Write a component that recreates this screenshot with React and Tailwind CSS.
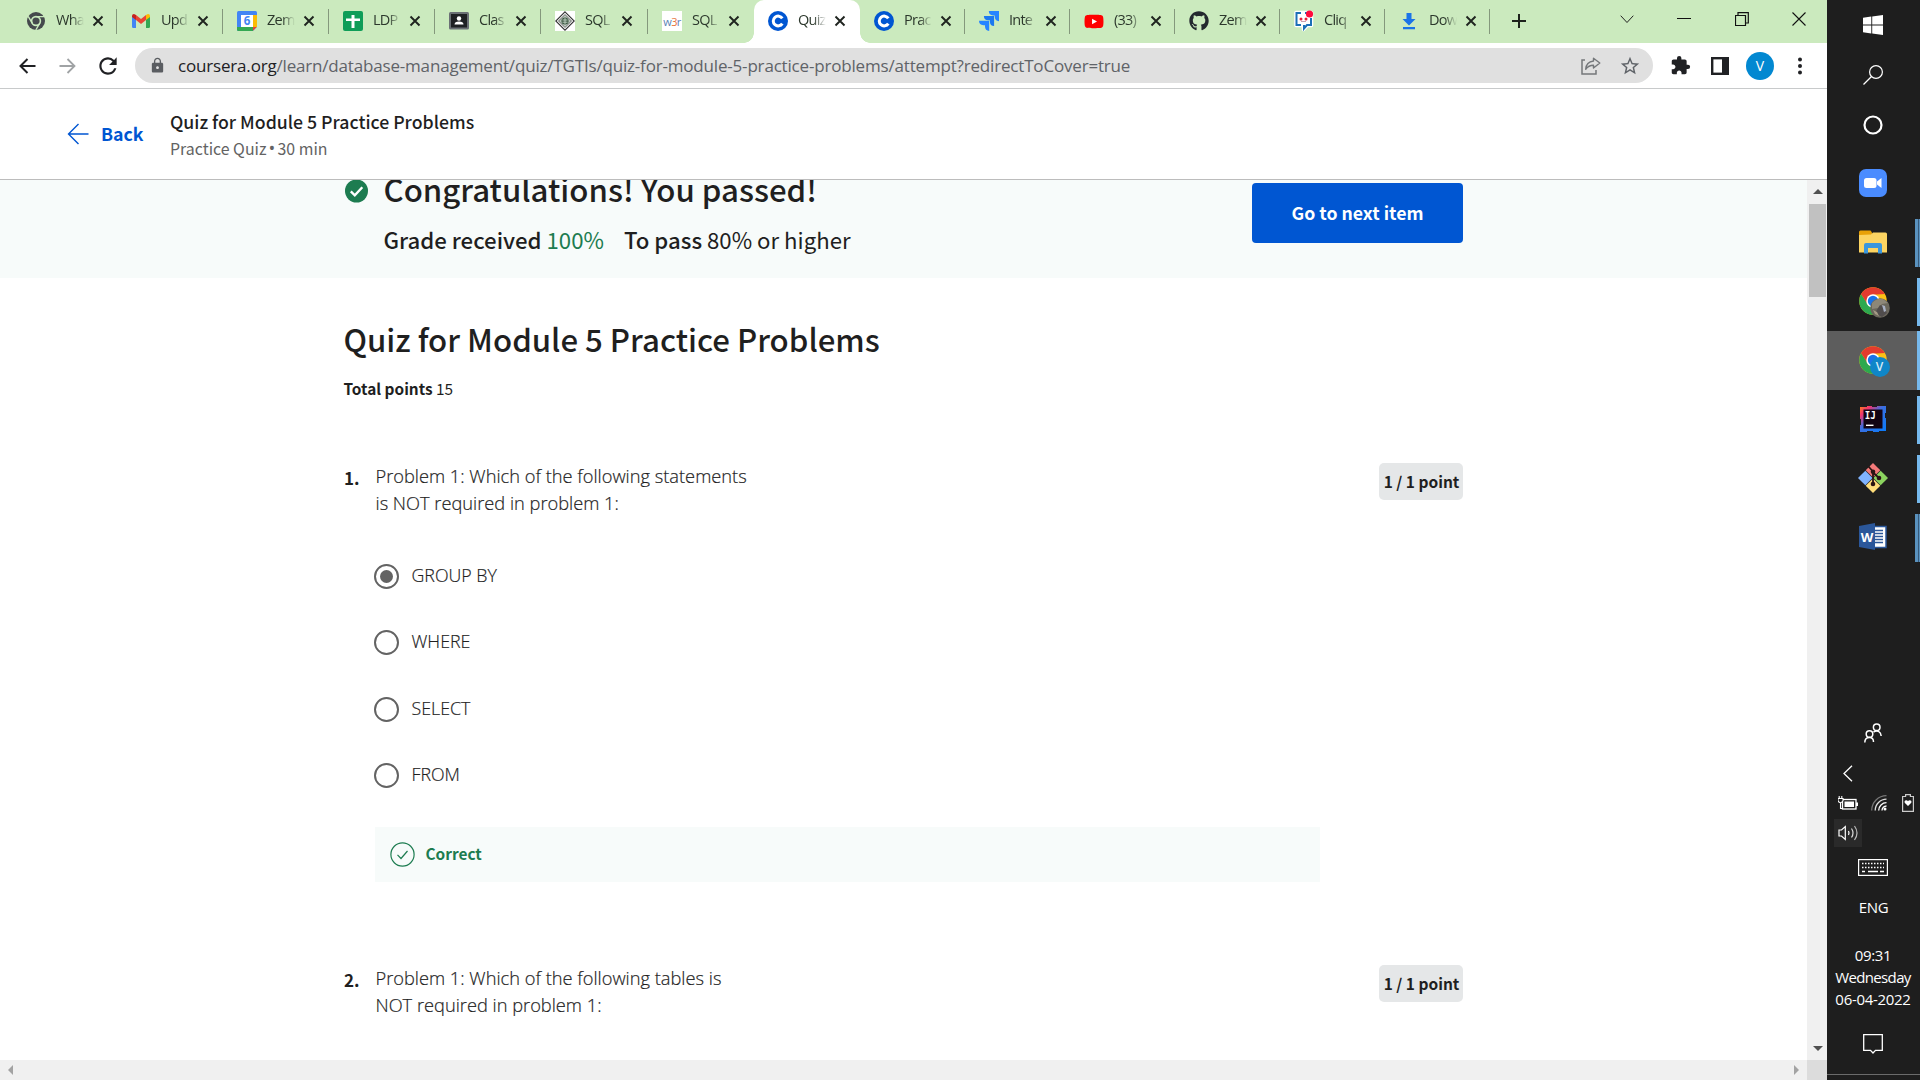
import { FaYoutube, FaGithub } from "react-icons/fa";
import { MdExtension, MdLock, MdStarBorder, MdRefresh } from "react-icons/md";

/* ---------- favicons ---------- */
const ChromeGrey = () => (
  <svg width="20" height="20" viewBox="0 0 20 20">
    <circle cx="10" cy="10" r="9" fill="#45494d" />
    <circle cx="10" cy="10" r="4.4" fill="#45494d" stroke="#caeabe" strokeWidth="1.6" />
    <path d="M10 5.6H18M6.2 12.2L2.2 5.3M13.8 12.2L9.8 19" stroke="#caeabe" strokeWidth="1.4" />
  </svg>
);
const Gmail = () => (
  <svg width="20" height="20" viewBox="0 0 20 20">
    <path d="M1 16.5V5l4 3v9H2.2Q1 17 1 15.5z" fill="#4285f4" />
    <path d="M15 17V8l4-3v10.5q0 1.500-1.200 1.500z" fill="#34a853" />
    <path d="M1 6V5q0-2 2-2l2 1v5z" fill="#c5221f" />
    <path d="M19 6V5q0-2-2-2l-2 1v5z" fill="#fbbc04" />
    <path d="M5 4l5 4 5-4v5l-5 4-5-4z" fill="#ea4335" />
  </svg>
);
const Calendar = () => (
  <svg width="20" height="20" viewBox="0 0 20 20">
    <rect width="20" height="20" rx="1.500" fill="#4285f4" />
    <path d="M16 4h4v12h-4z" fill="#fbbc04" />
    <path d="M0 16h16v4H1.500Q0 20 0 18.500z" fill="#34a853" />
    <path d="M16 16h4l-4 4z" fill="#ea4335" />
    <path d="M20 16v4h-4z" fill="#caeabe" />
    <rect x="4" y="4" width="12" height="12" fill="#fff" />
    <text x="10" y="14.200" textAnchor="middle" fontSize="11.500" fontWeight="700" fill="#4285f4" fontFamily="Open Sans, sans-serif">6</text>
  </svg>
);
const Sheets = () => (
  <svg width="20" height="20" viewBox="0 0 20 20">
    <rect width="20" height="20" rx="2" fill="#0f9d58" />
    <path d="M8.500 4h3v3.500H17v2.500h-5.500V17h-3v-7H3V7.500h5.500z" fill="#fff" />
  </svg>
);
const Classroom = () => (
  <svg width="20" height="20" viewBox="0 0 20 20">
    <rect y="1" width="20" height="17.500" rx="1.500" fill="#6b7075" />
    <rect x="2" y="3" width="16" height="13.500" fill="#1f2124" />
    <circle cx="10" cy="7.500" r="2.200" fill="#fff" />
    <path d="M5.500 13.500q0-3 4.500-3t4.500 3z" fill="#fff" />
  </svg>
);
const SqlDiamond = () => (
  <svg width="20" height="20" viewBox="0 0 20 20">
    <rect width="20" height="20" fill="#fff" />
    <path d="M10 .8L19.200 10 10 19.200.8 10z" fill="none" stroke="#333" strokeWidth="1.100" />
    <path d="M10 3.500L16.500 10 10 16.500 3.500 10z" fill="#b9c6bb" stroke="#444" strokeWidth=".8" />
    <circle cx="10" cy="10" r="3.600" fill="#3f5a45" />
    <path d="M7.500 9h5M7.500 11.200h5M10 7v6" stroke="#cfe0d2" strokeWidth=".8" />
  </svg>
);
const W3r = () => (
  <span className="flex h-5 w-5 items-center justify-center bg-white font-['Open_Sans',sans-serif] text-[11px] leading-none tracking-[-0.6px] text-[#5b7fb5]">
    w<span className="text-[#e8743b]">3</span>r
  </span>
);
const Coursera = () => (
  <svg width="20" height="20" viewBox="0 0 20 20">
    <circle cx="10" cy="10" r="10" fill="#0056d2" />
    <path d="M14.300 7.400A4.900 4.900 0 1 0 14.300 12.600" fill="none" stroke="#fff" strokeWidth="3" />
  </svg>
);
const Jira = () => (
  <svg width="20" height="20" viewBox="0 0 20 20">
    <path d="M9.800 0H20v10.200a4.500 4.500 0 0 1-4.200-4.400V4.400h-1.600A4.500 4.500 0 0 1 9.800 0z" fill="#2684ff" />
    <path d="M4.900 4.900h10.200v10.200a4.500 4.500 0 0 1-4.200-4.400V9.300H9.300a4.500 4.500 0 0 1-4.400-4.400z" fill="#1b78f0" />
    <path d="M0 9.800h10.200V20A4.500 4.500 0 0 1 6 15.600v-1.400H4.400A4.500 4.500 0 0 1 0 9.800z" fill="#2684ff" />
  </svg>
);
const Youtube = () => (
  <FaYoutube size={21} color="#ff0000" className="bg-[linear-gradient(#fff,#fff)] bg-[length:8px_8px] bg-center bg-no-repeat" />
);
const Github = () => <FaGithub size={20} color="#24292f" />;
const Cliq = () => (
  <svg width="20" height="22" viewBox="0 0 20 22">
    <path d="M2 2.500h15.500v13h-4l-4 4v-4H2z" fill="#fff" stroke="#fff" strokeWidth="3.500" strokeLinejoin="round" />
    <path d="M7 3H2.500v12H7M11 3h2M17 8v7h-4l-3 3.500V15" fill="none" stroke="#1c6fb8" strokeWidth="2" />
    <circle cx="7" cy="9" r="1.500" fill="#e5203c" />
    <circle cx="12" cy="9" r="1.500" fill="#e5203c" />
    <path d="M7 11.500h5" stroke="#c9a0b0" strokeWidth="1" />
    <circle cx="15.500" cy="4" r="3.600" fill="#ff0a3c" />
  </svg>
);
const Download = () => (
  <svg width="20" height="20" viewBox="0 0 20 20">
    <path d="M7.500 2h5v6h4L10 14.500 3.500 8h4zM4 16h12v2.300H4z" fill="#1a73e8" />
  </svg>
);

const TABS = [
  { t: "Wha", I: ChromeGrey, w: "w-[105px]" },
  { t: "Upd", I: Gmail, w: "w-[106px]" },
  { t: "Zem", I: Calendar, w: "w-[106px]" },
  { t: "LDP", I: Sheets, w: "w-[106px]" },
  { t: "Clas", I: Classroom, w: "w-[106px]" },
  { t: "SQL", I: SqlDiamond, w: "w-[107px]" },
  { t: "SQL", I: W3r, w: "w-[106px]", noSep: true },
  { t: "Quiz", I: Coursera, w: "w-[106px]", active: true },
  { t: "Prac", I: Coursera, w: "w-[105px]" },
  { t: "Inte", I: Jira, w: "w-[105px]" },
  { t: "(33)", I: Youtube, w: "w-[105px]" },
  { t: "Zem", I: Github, w: "w-[105px]" },
  { t: "Cliq", I: Cliq, w: "w-[105px]" },
  { t: "Dow", I: Download, w: "w-[105px]" },
];

function Tab({ t, I, w, active, noSep }) {
  return (
    <div className={`relative flex h-[43px] shrink-0 items-center pb-px pl-[14px] ${w} ${active ? "rounded-t-[10px] bg-white" : ""}`}>
      <span className="flex w-5 shrink-0 justify-center"><I /></span>
      <span className="-mt-[2px] ml-[10px] w-[28px] shrink-0 overflow-hidden whitespace-nowrap font-['Open_Sans',sans-serif] text-[14.500px] leading-[20px] tracking-[-0.750px] text-[#2c382c] [mask-image:linear-gradient(to_right,#000_55%,transparent)]">{t}</span>
      <svg className="ml-[8px] shrink-0" width="12" height="12" viewBox="0 0 12 12">
        <path d="M1.500 1.500l9 9M10.500 1.500l-9 9" stroke="#1f241f" strokeWidth="1.900" />
      </svg>
      {!active && !noSep && <span className="absolute right-0 top-[9px] h-[25px] w-px bg-[#84987c]" />}
      {active && (
        <>
          <span className="absolute -left-[10px] bottom-0 h-[10px] w-[10px] bg-[radial-gradient(circle_at_0_0,transparent_9.500px,#fff_10px)]" />
          <span className="absolute -right-[10px] bottom-0 h-[10px] w-[10px] bg-[radial-gradient(circle_at_100%_0,transparent_9.500px,#fff_10px)]" />
        </>
      )}
    </div>
  );
}

function TabStrip() {
  return (
    <div className="flex h-[43px] shrink-0 bg-[#cbeabe] pl-[12px]">
      {TABS.map((tab, i) => <Tab key={i} {...tab} />)}
      <svg className="ml-[22px] mt-[14px]" width="14" height="14" viewBox="0 0 14 14">
        <path d="M7 0v14M0 7h14" stroke="#1d221c" strokeWidth="2" />
      </svg>
      <div className="ml-auto flex h-[38px] items-center pr-[21px]">
        <svg width="14" height="9" viewBox="0 0 14 9"><path d="M.7.7L7 7.500 13.300.7" fill="none" stroke="#222" /></svg>
        <svg className="ml-[43px]" width="14" height="2" viewBox="0 0 14 2"><path d="M0 .5h14" stroke="#111" /></svg>
        <svg className="ml-[44px]" width="14" height="14" viewBox="0 0 14 14">
          <path d="M.5 3.500h10v10H.5zM3 3.500V.7h10.300V11h-2.800" fill="none" stroke="#111" strokeWidth="1.200" />
        </svg>
        <svg className="ml-[43px]" width="14" height="14" viewBox="0 0 14 14"><path d="M.5.5l13 13M13.500.5l-13 13" stroke="#111" strokeWidth="1.100" /></svg>
      </div>
    </div>
  );
}

function Toolbar() {
  return (
    <div className="flex h-[46px] shrink-0 items-center border-b border-[#c8cacb] bg-white pl-[19px] pr-[18px]">
      <svg width="17" height="16" viewBox="0 0 17 16"><path d="M16.500 8H1.500M8.500 1L1.500 8l7 7" fill="none" stroke="#202124" strokeWidth="2" /></svg>
      <svg className="ml-[23px]" width="17" height="16" viewBox="0 0 17 16"><path d="M.5 8h15M8.500 1l7 7-7 7" fill="none" stroke="#a0a3a5" strokeWidth="1.800" /></svg>
      <MdRefresh className="ml-[19px]" size={26} color="#202124" />
      <div className="ml-[14px] flex h-[35px] w-[1518px] items-center rounded-full bg-[#e0e0e0] pl-[14px] pr-[12px]">
        <MdLock size={17} color="#5a5d61" className="shrink-0" />
        <div className="ml-[12px] whitespace-nowrap font-['Open_Sans',sans-serif] text-[17px] leading-[24px] tracking-[-0.180px] text-[#5f6368]">
          <span className="text-[#202124]">coursera.org</span>/learn/database-management/quiz/TGTIs/quiz-for-module-5-practice-problems/attempt?redirectToCover=true
        </div>
        <svg className="ml-auto" width="20" height="18" viewBox="0 0 20 18">
          <path d="M4 3H1v14h14v-4" fill="none" stroke="#74777a" strokeWidth="1.500" />
          <path d="M12.500 1.200L18.800 6l-6.300 5V8.300c-3.500 0-5.800 1.200-7.800 4C5 8 7.500 4.600 12.500 4z" fill="none" stroke="#74777a" strokeWidth="1.400" strokeLinejoin="round" />
        </svg>
        <MdStarBorder className="ml-[18px]" size={22} color="#5f6368" />
      </div>
      <MdExtension className="ml-[17px]" size={21} color="#202124" />
      <svg className="ml-[20px]" width="18" height="18" viewBox="0 0 18 18">
        <rect x="1.200" y="1.200" width="15.600" height="15.600" fill="#fff" stroke="#202124" strokeWidth="2.400" />
        <path d="M11 1h6v16h-6z" fill="#202124" />
      </svg>
      <div className="ml-[17px] flex h-7 w-7 items-center justify-center rounded-full bg-[#0288d1] font-['Open_Sans',sans-serif] text-[14px] text-white">V</div>
      <svg className="ml-auto" width="18" height="18" viewBox="0 0 18 18">
        <circle cx="9" cy="2.500" r="2" fill="#202124" /><circle cx="9" cy="9" r="2" fill="#202124" /><circle cx="9" cy="15.500" r="2" fill="#202124" />
      </svg>
    </div>
  );
}

function QuizHeader() {
  return (
    <div className="flex h-[91px] shrink-0 items-center border-b border-[#bcbcbc] bg-white pl-[67px] font-['Noto_Sans_CJK_SC',sans-serif]">
      <svg width="22" height="22" viewBox="0 0 22 22"><path d="M21.500 11H1.500M11.500 1l-10 10 10 10" fill="none" stroke="#0056d2" strokeWidth="1.400" /></svg>
      <span className="-mt-[2px] ml-[12px] w-[69px] text-[17.700px] font-bold leading-[24px] text-[#0056d2]">Back</span>
      <div className="pt-[2px]">
        <div className="-mt-px text-[17.700px] font-medium leading-[26px] text-[#1f1f1f]">Quiz for Module 5 Practice Problems</div>
        <div className="mt-px flex items-center text-[15.900px] leading-[27px] text-[#636363]">
          Practice Quiz<span className="w-[11px] text-center font-['Open_Sans',sans-serif] text-[18px]">•</span>30 min
        </div>
      </div>
    </div>
  );
}

function ResultBanner() {
  return (
    <div className="flex h-[98px] shrink-0 items-start bg-[#f7fbfa] pl-[344px] text-[#1f1f1f]">
      <svg className="shrink-0" width="25" height="23" viewBox="0 0 24 23">
        <circle cx="12" cy="11" r="11.500" fill="#1d7c50" />
        <path d="M6.300 11.300l4 4 7.500-8" fill="none" stroke="#fff" strokeWidth="2.400" />
      </svg>
      <div className="ml-[14.500px] -mt-[11px]">
        <div className="text-[31.200px] font-medium leading-[40px]">Congratulations! You passed!</div>
        <div className="mt-[15px] flex gap-[20px] text-[22.200px] leading-[30px]">
          <span><span className="font-medium">Grade received</span> <span className="text-[#1d7c50]">100%</span></span>
          <span><span className="font-medium">To pass</span> 80% or higher</span>
        </div>
      </div>
      <button className="ml-auto mr-[344px] mt-[3px] h-[60px] w-[211px] rounded-[4px] bg-[#0056d2] pb-[2px] text-[17.700px] font-bold text-white">Go to next item</button>
    </div>
  );
}

function Radio({ label, checked }) {
  return (
    <div className="flex h-[66.300px] items-center">
      <span className="flex h-[25px] w-[25px] items-center justify-center rounded-full border-[2.500px] border-[#636363]">
        {checked && <span className="h-[13px] w-[13px] rounded-full bg-[#636363]" />}
      </span>
      <span className="ml-[12.500px] -mt-[3px] font-['Open_Sans',sans-serif] text-[17.800px] font-light leading-[26px] text-[#1f1f1f] [-webkit-text-stroke:0.2px_#1f1f1f]">{label}</span>
    </div>
  );
}

function Question({ n, lines, children }) {
  return (
    <div className="flex h-[502px] shrink-0 items-start pl-[344px] pr-[344px] text-[#1f1f1f]">
      <span className="mt-[2px] w-[31px] text-[17px] font-bold leading-[26px]">{n}.</span>
      <div className="w-[945px]">
        <div className="pl-[0.5px] font-['Open_Sans',sans-serif] text-[18.250px] font-light leading-[26.500px] [-webkit-text-stroke:0.2px_#1f1f1f]">
          {lines.map((l) => <div key={l}>{l}</div>)}
        </div>
        {children}
      </div>
      <span className="ml-auto flex h-[37px] w-[84px] shrink-0 items-center justify-center whitespace-nowrap rounded-[5px] bg-[#e5e7e8] pl-px text-[15.500px] font-bold">1 / 1 point</span>
    </div>
  );
}

function Content() {
  return (
    <div className="flex min-w-0 flex-1 flex-col overflow-hidden bg-white font-['Noto_Sans_CJK_SC',sans-serif]">
      <ResultBanner />
      <div className="h-[185px] shrink-0 pl-[343.500px] pt-[41px] text-[#1f1f1f]">
        <div className="text-[31.200px] font-medium leading-[40px]">Quiz for Module 5 Practice Problems</div>
        <div className="mt-[16px] text-[15.400px] leading-[26px]"><span className="font-bold">Total points</span> 15</div>
      </div>
      <Question n="1" lines={["Problem 1: Which of the following statements", "is NOT required in problem 1:"]}>
        <div className="-ml-[1px] mt-[27.500px]">
          <Radio label="GROUP BY" checked />
          <Radio label="WHERE" />
          <Radio label="SELECT" />
          <Radio label="FROM" />
        </div>
        <div className="mt-[18px] flex h-[55px] items-center bg-[#f7fbfa] pl-[15px]">
          <svg width="25" height="25" viewBox="0 0 25 25">
            <circle cx="12.500" cy="12.500" r="11.600" fill="none" stroke="#1d7c50" strokeWidth="1.200" />
            <path d="M7.500 12.800l3.500 3.700 6.500-7.500" fill="none" stroke="#1d7c50" strokeWidth="1.200" />
          </svg>
          <span className="-mt-[2px] ml-[10.500px] text-[15.400px] font-bold leading-[24px] text-[#1d7c50]">Correct</span>
        </div>
      </Question>
      <Question n="2" lines={["Problem 1: Which of the following tables is", "NOT required in problem 1:"]} />
    </div>
  );
}

function VerticalScrollbar() {
  return (
    <div className="flex w-5 shrink-0 flex-col items-center bg-[#f0f0f0]">
      <div className="flex h-[23px] items-center pl-px"><div className="h-0 w-0 border-x-[5px] border-b-[5px] border-x-transparent border-b-[#505050]" /></div>
      <div className="mr-px mt-px h-[93px] w-[17px] self-end bg-[#c1c1c1]" />
      <div className="mt-auto flex h-[24px] items-center pl-px"><div className="h-0 w-0 border-x-[5px] border-t-[5px] border-x-transparent border-t-[#505050]" /></div>
    </div>
  );
}

/* ---------- taskbar ---------- */
const Chrome = ({ children }) => (
  <span className="relative">
    <svg width="28" height="28" viewBox="0 0 28 28">
      <circle cx="14" cy="14" r="13.800" fill="#fbc116" />
      <path d="M2.050 7.100A13.800 13.800 0 0 0 14 27.800L19.500 17L8 16z" fill="#2da94f" />
      <path d="M2.050 7.100L8.500 17l5-9.200 12.450-.7A13.800 13.800 0 0 0 2.050 7.100z" fill="#e33b2e" />
      <circle cx="14" cy="14" r="6.700" fill="#fff" />
      <circle cx="14" cy="14" r="5.200" fill="#1a73e8" />
    </svg>
    {children}
  </span>
);

function TaskItem({ children, active, bar }) {
  return (
    <div className={`flex h-[59px] w-full items-center ${active ? "bg-[#5d5d5d]" : ""}`}>
      <div className="flex flex-1 items-center justify-center pb-[2px] pl-px">{children}</div>
      {bar === "stack" && <span className="-ml-[2px] flex h-[48px] w-[5px]"><i className="w-[3px] bg-[#5a92be]" /><i className="w-px bg-[#37597a]" /><i className="w-px bg-[#5a92be]" /></span>}
      {bar === "one" && <span className={`w-[3px] bg-[#76b9ed] ${active ? "h-full" : "h-[48px]"}`} />}
      {!bar && <span className="w-[3px]" />}
    </div>
  );
}

function Taskbar() {
  return (
    <aside className="flex w-[93px] shrink-0 flex-col items-center bg-[#1e1e1e] font-['Open_Sans',sans-serif] text-white">
      <div className="flex h-[50px] items-center pr-px">
        <svg width="20" height="20" viewBox="0 0 20 20"><path d="M0 2.800l8.300-1.200v7.900H0zM9.200 1.500L20 0v9.500H9.200zM0 10.500h8.300v7.900L0 17.200zM9.200 10.500H20V20L9.200 18.500z" fill="#fff" /></svg>
      </div>
      <div className="flex h-[50px] items-center pr-px">
        <svg width="20" height="20" viewBox="0 0 20 20"><circle cx="13" cy="7" r="6.400" fill="none" stroke="#fff" strokeWidth="1.200" /><path d="M8.500 11.500L.5 19.500" stroke="#fff" strokeWidth="1.300" /></svg>
      </div>
      <div className="flex h-[50px] items-center pr-px">
        <svg width="20" height="20" viewBox="0 0 20 20"><circle cx="10" cy="10" r="8.500" fill="none" stroke="#fff" strokeWidth="2.200" /></svg>
      </div>
      <div className="h-[4px]" />
      <TaskItem>
        <svg width="28" height="28" viewBox="0 0 28 28"><rect width="28" height="28" rx="7" fill="#4a8cff" /><rect x="5" y="9" width="12.500" height="10" rx="2.500" fill="#fff" /><path d="M18 12.500l4.500-3.500v10L18 15.500z" fill="#fff" /></svg>
      </TaskItem>
      <TaskItem bar="stack">
        <svg width="28" height="24" viewBox="0 0 28 24">
          <path d="M0 2q0-1.500 1.500-1.500h10L13 2.500V6H0z" fill="#e8a107" />
          <path d="M0 5l12-.5 2-2h12.500Q28 2.500 28 4v18.500H0z" fill="#fcd462" />
          <path d="M5 23.500V15q0-2 2-2h14q2 0 2 2v8.500h-4V18H9v5.500z" fill="#3a96dd" />
        </svg>
      </TaskItem>
      <TaskItem bar="one">
        <Chrome>
          <svg className="absolute left-[11px] top-[11px]" width="20" height="20" viewBox="0 0 20 20">
            <circle cx="10" cy="10" r="9.800" fill="#6b675c" />
            <path d="M2 5q5-5 11-4l5 4-6 1-4 4-6 1z" fill="#8d8778" />
            <path d="M5 15l5-8 4 2 3 6-5 4z" fill="#504c4c" />
            <path d="M12 7l3 1 1 5-2 1z" fill="#a9b1c4" />
            <path d="M3 12l4 2 2 4-4-2z" fill="#a59a85" />
          </svg>
        </Chrome>
      </TaskItem>
      <TaskItem bar="one" active>
        <Chrome><span className="absolute left-[11px] top-[11px] flex h-5 w-5 items-center justify-center rounded-full bg-[#0f86c8] text-[12px] font-semibold leading-none text-[#d5ecf8]">V</span></Chrome>
      </TaskItem>
      <TaskItem bar="one">
        <svg width="26" height="26" viewBox="0 0 26 26">
          <defs><linearGradient id="ij" x1="0" y1="0" x2="1" y2="1"><stop offset="0" stopColor="#fc801d" /><stop offset=".2" stopColor="#f0336f" /><stop offset=".45" stopColor="#3b6fe0" /><stop offset="1" stopColor="#087cfa" /></linearGradient></defs>
          <path d="M0 1h7V0h5v1h5V0h9v7h-1v5h1v13h-7v1h-6v-1H7v1H0v-7h1v-6H0z" fill="url(#ij)" />
          <rect x="3.500" y="3.500" width="19" height="19" fill="#120312" />
          <text x="4.800" y="13" fontSize="10.500" fontWeight="700" fill="#fff" fontFamily="DejaVu Sans Mono, monospace" textLength="11" lengthAdjust="spacingAndGlyphs">IJ</text>
          <path d="M6 19.300h7.500" stroke="#fff" strokeWidth="1.400" />
        </svg>
      </TaskItem>
      <TaskItem bar="one">
        <svg width="30" height="30" viewBox="0 0 30 30">
          <path d="M15 0l7.300 7.300L15 14.600 7.700 7.300z" fill="#f47a7a" /><path d="M7.300 7.700l7.300 7.300-7.300 7.300L0 15z" fill="#80b3ff" /><path d="M22.700 7.700L30 15l-7.300 7.300-7.300-7.300z" fill="#8bd35f" /><path d="M15 15.400l7.300 7.300L15 30l-7.300-7.300z" fill="#ffdd7a" />
          <path d="M10.500 3.500L15 8.500V21M15 9.500l6 5.500" fill="none" stroke="#2b1414" strokeWidth="1.800" />
          <circle cx="15" cy="8.800" r="2.300" fill="#2b1414" /><circle cx="21" cy="15" r="2.300" fill="#2b1414" /><circle cx="15" cy="21" r="2.300" fill="#2b1414" />
        </svg>
      </TaskItem>
      <TaskItem bar="stack">
        <svg width="28" height="28" viewBox="0 0 28 28">
          <rect x="14" y="3.500" width="13" height="21" fill="#fff" stroke="#2b579a" strokeWidth="1.500" />
          <path d="M16 7.500h8M16 10.500h8M16 13.500h8M16 16.500h8M16 19.500h8" stroke="#2b579a" strokeWidth="1.500" />
          <path d="M0 3l16-3v27L0 24z" fill="#2b579a" />
          <text x="8" y="18.500" textAnchor="middle" fontSize="13" fontWeight="700" fill="#fff" fontFamily="Open Sans, sans-serif">W</text>
        </svg>
      </TaskItem>

      <div className="mt-[141px] flex h-[50px] items-center pr-px">
        <svg width="20" height="20" viewBox="0 0 20 20" fill="none" stroke="#fff" strokeWidth="1.500">
          <circle cx="6.500" cy="11" r="3.300" /><path d="M1.800 19.500c0-3 2-5 4.700-5s4 2 4 4.500" />
          <circle cx="13.700" cy="4.300" r="3.300" /><path d="M10.500 9c3.500-2.300 7.300-.5 7.700 4" />
        </svg>
      </div>
      <div className="flex h-[31px] w-full items-center pl-[16px]">
        <svg width="10" height="17" viewBox="0 0 10 17"><path d="M9 .8L1 8.500 9 16.200" fill="none" stroke="#fff" strokeWidth="1.300" /></svg>
      </div>
      <div className="flex h-[28px] w-full items-center pl-[11px]">
        <svg width="20" height="16" viewBox="0 0 20 16">
          <rect x="4.500" y="4.500" width="13.500" height="9.500" fill="none" stroke="#fff" strokeWidth="1.300" /><path d="M6.500 6.500h9.500v5.500h-9.500zM18 7.500h2v3.500h-2z" fill="#fff" />
          <path d="M0 3.500h5v2q0 1.700-2.500 2.200Q0 7.200 0 5.500z" fill="#1e1e1e" stroke="#fff" strokeWidth="1.100" /><path d="M1.200 1v3M3.800 1v3M2.500 8v5.500h2" stroke="#fff" strokeWidth="1.100" fill="none" />
        </svg>
        <svg className="ml-[13px]" width="16" height="16" viewBox="0 0 16 16" fill="none">
          <path d="M.7 15.500A14.800 14.800 0 0 1 15.500.7" stroke="#777" strokeWidth="1.300" /><path d="M4.200 15.500A11.300 11.300 0 0 1 15.500 4.200" stroke="#ddd" strokeWidth="1.300" /><path d="M7.700 15.500a7.800 7.800 0 0 1 7.800-7.800" stroke="#fff" strokeWidth="1.300" /><path d="M11 15.500a4.500 4.500 0 0 1 4.500-4.500" stroke="#fff" strokeWidth="1.300" /><circle cx="14" cy="14" r="1.500" fill="#fff" />
        </svg>
        <svg className="ml-[15px]" width="12" height="18" viewBox="0 0 12 18">
          <path d="M.6 2.500h3V.7h4.800v1.800h3v14.800H.6z" fill="none" stroke="#ccc" strokeWidth="1.200" /><path d="M6 12L2.700 8.800Q2 6.500 4.200 6.300 5.500 6.300 6 7.300q.5-1 1.800-1Q10 6.500 9.300 8.800z" fill="#fff" />
        </svg>
      </div>
      <div className="ml-[7px] mt-[2px] flex h-[28px] w-[28px] items-center justify-center self-start bg-[#2a2a2a]">
        <svg width="21" height="18" viewBox="0 0 21 18" fill="none" stroke="#fff" strokeWidth="1.200">
          <path d="M1 6h2.500L7.300 2.500v13L3.500 12H1z" /><path d="M10.500 7q1 2 0 4" /><path d="M13.500 4.500q3 4.500 0 9" stroke="#ddd" /><path d="M16.500 2q5 7 0 14" stroke="#bbb" />
        </svg>
      </div>
      <div className="mt-[12px] pr-px">
        <svg width="30" height="17" viewBox="0 0 30 17">
          <rect x=".6" y=".6" width="28.800" height="15.800" fill="none" stroke="#fff" strokeWidth="1.200" />
          <path d="M4 4.500h22M4 8.500h22" stroke="#fff" strokeWidth="1.300" strokeDasharray="1.500 1.500" /><path d="M4 12.500h3M10 12.500h10M22 12.500h4" stroke="#fff" strokeWidth="1.300" />
        </svg>
      </div>
      <div className="mt-[20px] h-[22px] text-[15px] leading-[22px] tracking-[-0.300px]">ENG</div>
      <div className="mt-[26px] whitespace-nowrap pr-px text-center text-[15px] leading-[22px]">
        <div className="tracking-[-0.300px]">09:31</div>
        <div className="tracking-[-0.650px]">Wednesday</div>
        <div className="tracking-[-0.300px]">06-04-2022</div>
      </div>
      <svg className="mr-px mt-[24px] shrink-0" width="20" height="20" viewBox="0 0 20 20"><path d="M.7.700h18.600v15.600H12.500L10 19l-2.500-2.700H.7z" fill="none" stroke="#fff" strokeWidth="1.300" /></svg>
      <div className="mt-auto h-[6px] w-full shrink-0 border-t border-[#6b6b6b]" />
    </aside>
  );
}

export default function App() {
  return (
    <div className="flex h-[1080px] w-[1920px] overflow-hidden bg-white">
      <main className="flex w-[1827px] shrink-0 flex-col">
        <TabStrip />
        <Toolbar />
        <QuizHeader />
        <div className="flex h-[880px] shrink-0">
          <Content />
          <VerticalScrollbar />
        </div>
        <div className="flex h-5 shrink-0 items-center bg-[#f0f0f0] pl-[8px]">
          <div className="h-0 w-0 border-y-[5px] border-r-[5px] border-y-transparent border-r-[#a3a3a3]" />
          <div className="ml-auto mr-[8px] h-0 w-0 border-y-[5px] border-l-[5px] border-y-transparent border-l-[#a3a3a3]" />
          <div className="h-5 w-5 bg-[#dcdcdc]" />
        </div>
      </main>
      <Taskbar />
    </div>
  );
}
